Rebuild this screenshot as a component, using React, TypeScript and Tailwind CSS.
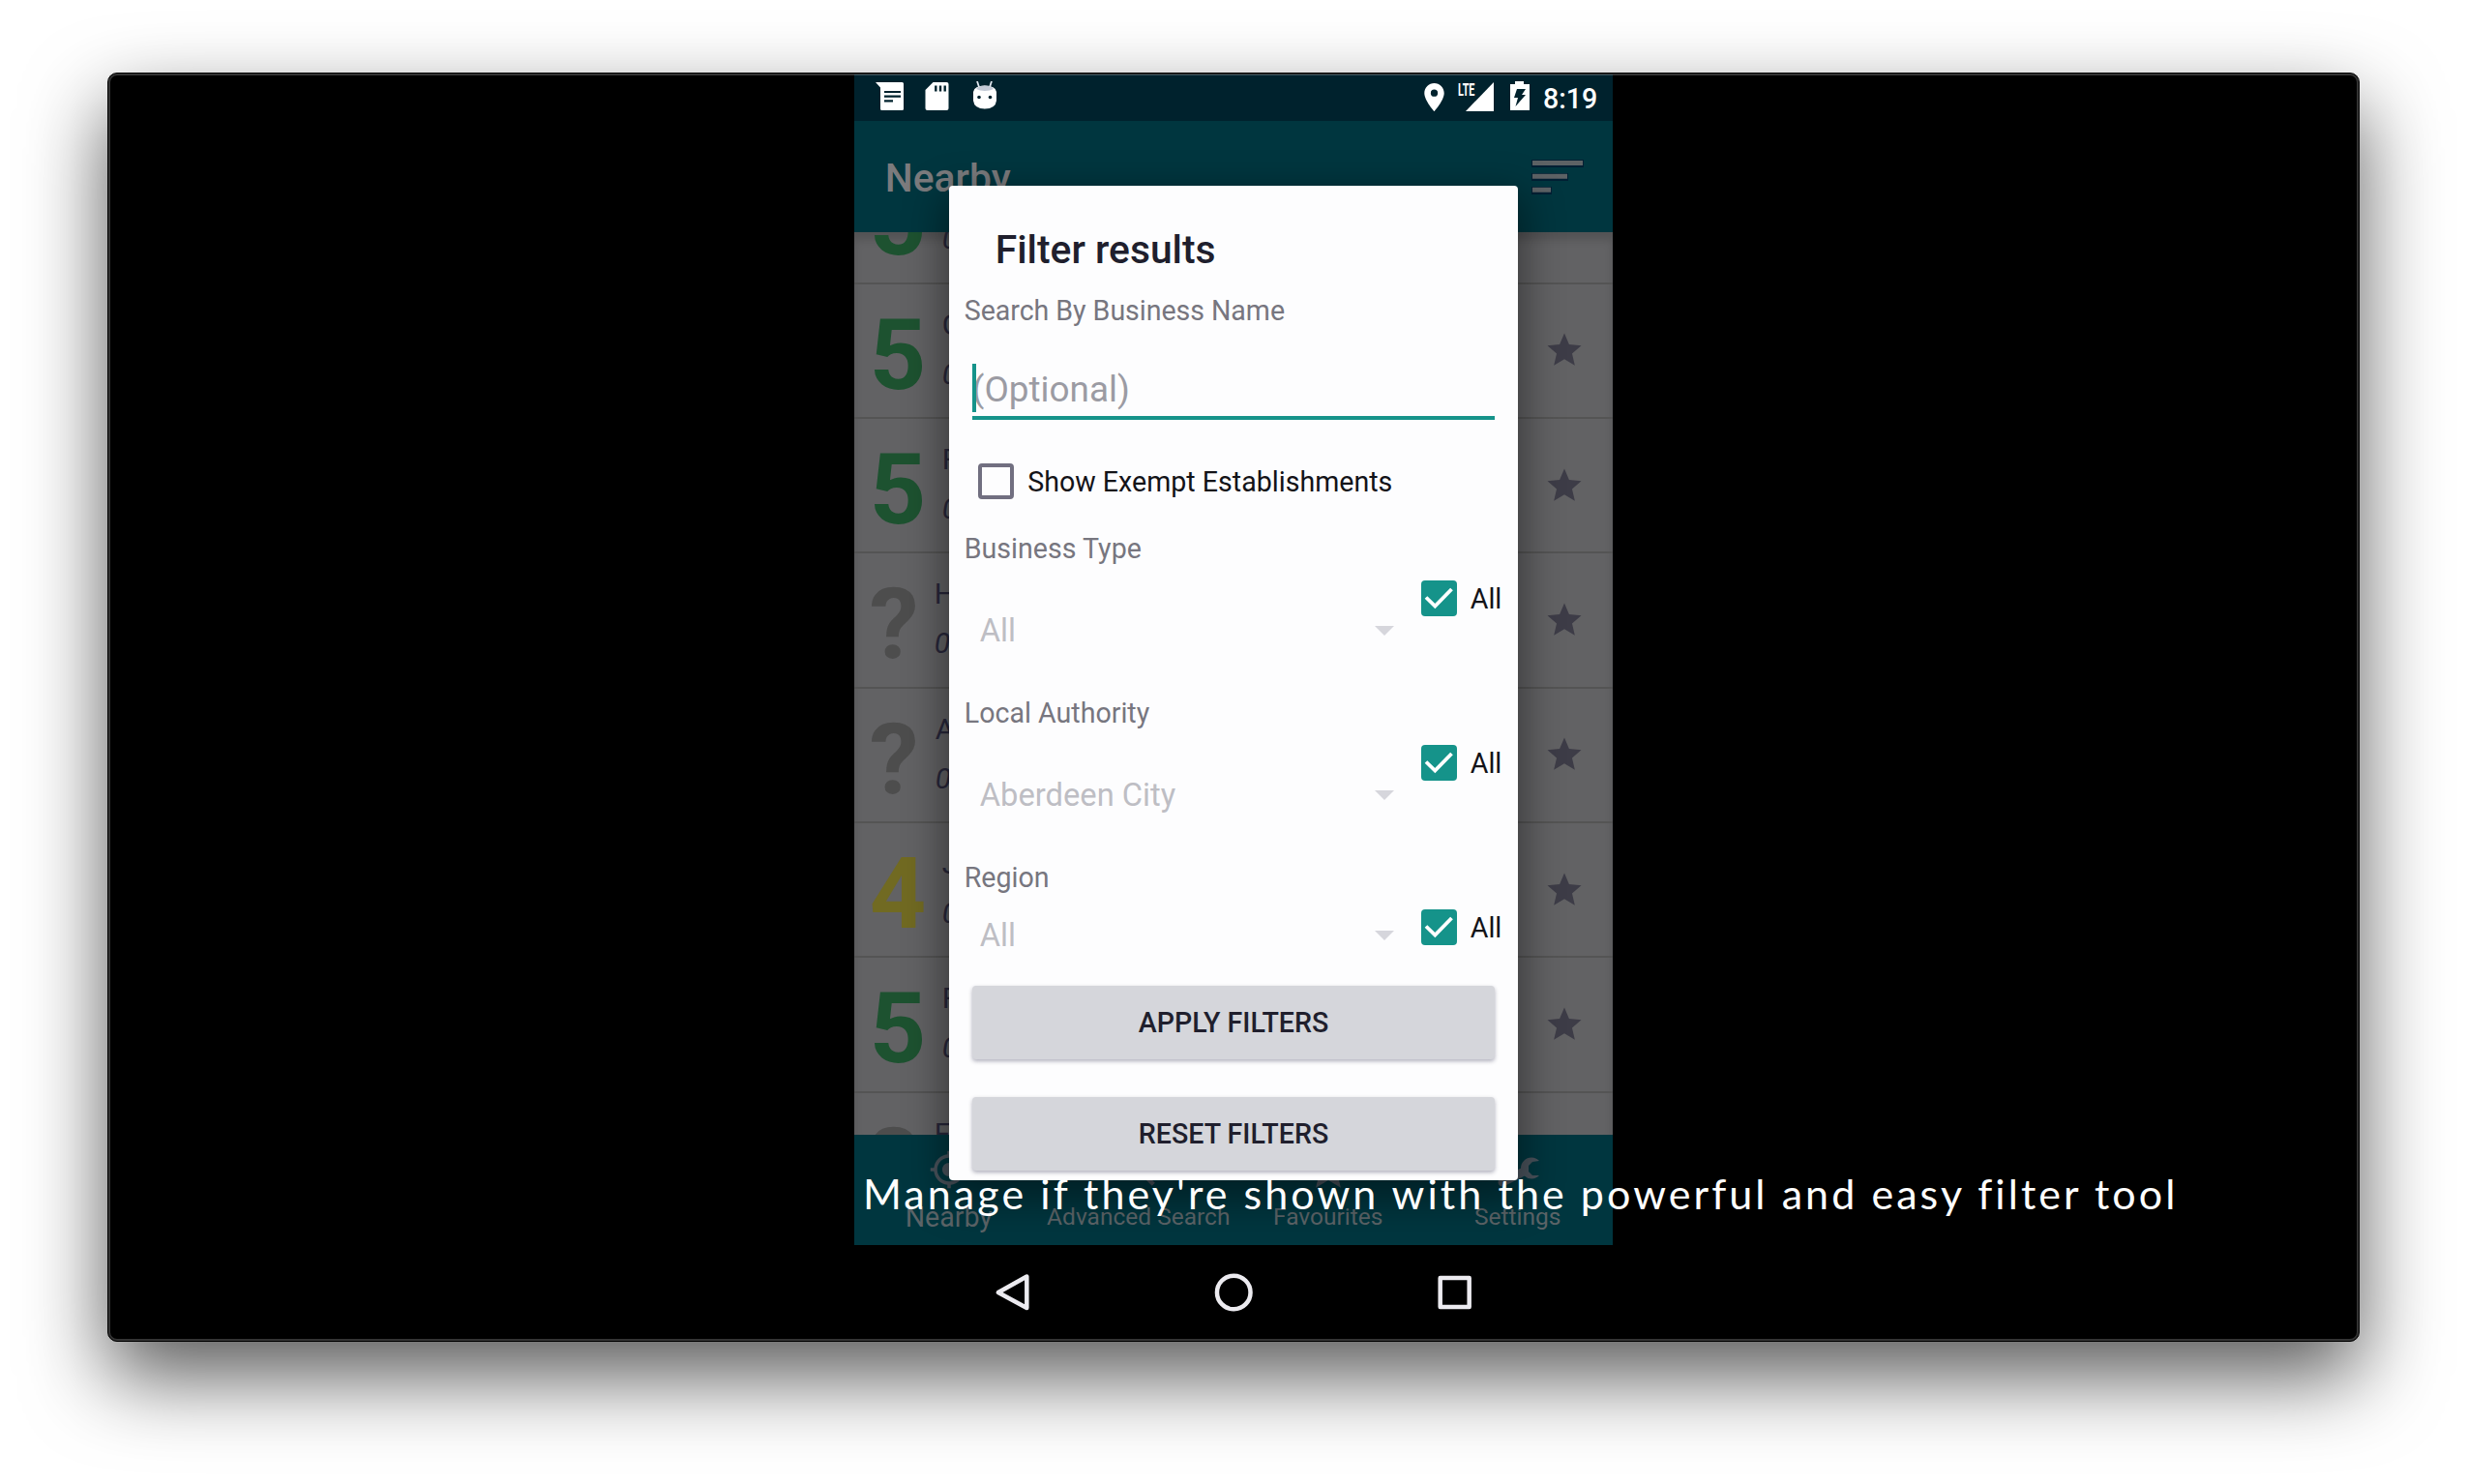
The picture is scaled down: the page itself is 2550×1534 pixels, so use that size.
import React from "react";
import { MdGpsFixed, MdSearch, MdStar, MdLocationOn } from "react-icons/md";

const STAR = "M12 17.3 18.2 21l-1.65-7.05L22 9.24l-7.2-.6L12 2 9.2 8.64 2 9.24l5.46 4.71L5.8 21z";

type Row = { mark: string; tone: string; title: string; indent: string };

const rows: Row[] = [
  { mark: "5", tone: "text-[#1d5230]", title: "C", indent: "pl-[91px]" },
  { mark: "5", tone: "text-[#1d5230]", title: "C", indent: "pl-[91px]" },
  { mark: "5", tone: "text-[#1d5230]", title: "F", indent: "pl-[91px]" },
  { mark: "?", tone: "text-[#4d4d4d]", title: "H", indent: "pl-[83px]" },
  { mark: "?", tone: "text-[#4d4d4d]", title: "A", indent: "pl-[84px]" },
  { mark: "4", tone: "text-[#716a22]", title: "J", indent: "pl-[91px]" },
  { mark: "5", tone: "text-[#1d5230]", title: "F", indent: "pl-[91px]" },
  { mark: "?", tone: "text-[#4d4d4d]", title: "F", indent: "pl-[83px]" },
];

function StatusBar() {
  return (
    <div className="flex h-[48.5px] items-start bg-[#00222d] text-white">
      <svg className="ml-[22px] mt-[8px] h-[30px] w-[30px] shrink-0" viewBox="0 0 30 30">
        <path d="M0 0h27.500q1.500 0 1.500 1.500v26q0 1.500-1.500 1.500h-21q-1.500 0-1.500-1.500V5.500z" fill="#fff" />
        <path d="M9 10h17M9 14.700h17M9 19.400h9" stroke="#00222d" strokeWidth="2.200" />
      </svg>
      <svg className="ml-[21px] mt-[8px] h-[30px] w-[25px] shrink-0" viewBox="0 0 25 30">
        <path d="M8.500 0h14q2 0 2 2v25q0 2-2 2h-20q-2 0-2-2V8z" fill="#fff" />
        <path d="M11.300 3.500v6M16 3.500v6M20.700 3.500v6" stroke="#00222d" strokeWidth="2.400" />
      </svg>
      <svg className="ml-[24px] mt-[7px] h-[30px] w-[26px] shrink-0" viewBox="0 0 26 30">
        <path d="M5 0l2 6M20 0l-2 6" stroke="#dfe6ee" strokeWidth="1.800" />
        <path d="M1 11q1-6.500 12-6.500t12 6.500v9q-1 8.500-12 8.500T1 20z" fill="#fff" />
        <path d="M4 8q2-3.500 9-3.500t9 3.500q-4 2-9 2T4 8z" fill="#c3cad6" />
        <circle cx="7" cy="16.500" r="1.800" fill="#00222d" />
        <circle cx="18.500" cy="16.500" r="1.800" fill="#00222d" />
      </svg>
      <div className="grow" />
      <MdLocationOn className="mt-[6px] h-[35px] w-[35px] shrink-0" />
      <div className="relative ml-[7px] mt-[8px] h-[30px] w-[38px] shrink-0">
        <svg className="h-[30px] w-[38px]" viewBox="0 0 38 30">
          <path d="M37 0v30H8z" fill="#fff" />
        </svg>
        <span className="absolute left-0 top-[1px] origin-left scale-x-[0.6] text-[18px] font-bold leading-[14px]">LTE</span>
      </div>
      <svg className="ml-[15px] mt-[7px] h-[31px] w-[22px] shrink-0" viewBox="0 0 22 31">
        <path d="M6 0h9v3h6v27H1V3h5z" fill="#fff" />
        <path d="M8 8h9l-4 6h4L6.500 26l2.500-9H5z" fill="#00222d" />
      </svg>
      <span className="ml-[13px] mr-[16px] mt-[8px] text-[28.6px] font-medium leading-[34px]">8:19</span>
    </div>
  );
}

function ListRow({ row }: { row: Row }) {
  return (
    <div className="relative flex h-[139.3px] shrink-0 items-center border-b-2 border-[#545454]">
      <div className={`absolute left-0 top-[16px] flex flex-col text-[30px] leading-[51px] text-[#28273a] ${row.indent}`}>
        <span>{row.title}</span>
        <span className="italic">0</span>
      </div>
      <span className={`w-[96px] pl-[16px] pt-[10px] text-[102px] font-bold leading-[129px] ${row.tone}`}>{row.mark}</span>
      <svg className="ml-auto mr-[29px] h-[42px] w-[42px]" viewBox="0 0 24 24">
        <path d={STAR} fill="#3d3c47" />
      </svg>
    </div>
  );
}

function Check() {
  return (
    <svg className="h-[37px] w-[37px] shrink-0" viewBox="0 0 37 37">
      <rect width="37" height="37" rx="4" fill="#15938a" />
      <path d="M5 17.500l9.300 9L31.500 9" fill="none" stroke="#fff" strokeWidth="3.800" />
    </svg>
  );
}

function FilterGroup({ label, value, tall }: { label: string; value: string; tall: boolean }) {
  return (
    <div className={tall ? "h-[170px]" : "h-[126px]"}>
      <div className="h-[32px] pl-[16px] text-[28.6px] leading-[32px] text-[#77767f]">{label}</div>
      <div className="flex pl-[32px]">
        <div className={`flex w-[428px] items-center ${tall ? "mt-[50px]" : "mt-[25px]"} h-[38px]`}>
          <span className="grow text-[32.7px] leading-[38px] text-[#bebec4]">{value}</span>
          <svg className="h-[10px] w-[20px]" viewBox="0 0 20 10">
            <path d="M0 0h20L10 10z" fill="#d6d6dc" />
          </svg>
        </div>
        <div className="ml-[28px] mt-[17px] flex h-[37px] items-center gap-[14px]">
          <Check />
          <span className="pt-[2px] text-[28.6px] leading-[37px] text-[#131318]">All</span>
        </div>
      </div>
    </div>
  );
}

function FilterDialog() {
  return (
    <div className="absolute left-[98px] top-[114.500px] z-20 h-[1028px] w-[588.500px] rounded-[4px] bg-[#fdfdfe] shadow-[0_14px_40px_6px_rgba(0,0,0,0.42)]">
      <div className="pl-[48px] pt-[36.500px] text-[40.8px] font-medium leading-[60px] text-[#201f2d]">Filter results</div>
      <div className="mt-[17px] pl-[16px] text-[28.6px] leading-[32px] tracking-[-0.05px] text-[#77767f]">Search By Business Name</div>
      <div className="relative ml-[24px] mt-[39px] h-[58px] w-[540px] border-b-4 border-[#15938a]">
        <span className="absolute left-0 top-0 h-[50px] w-[4px] bg-[#15938a]" />
        <span className="block text-[36.9px] leading-[53px] text-[#9b9ba3]">(Optional)</span>
      </div>
      <div className="ml-[30px] mt-[45px] flex h-[37px] items-center gap-[14.500px]">
        <span className="h-[37px] w-[37px] rounded-[4px] border-4 border-[#716f80]" />
        <span className="pt-[2px] text-[28.6px] leading-[37px] text-[#131318]">Show Exempt Establishments</span>
      </div>
      <div className="mt-[35px]">
        <FilterGroup label="Business Type" value="All" tall />
        <FilterGroup label="Local Authority" value="Aberdeen City" tall />
        <FilterGroup label="Region" value="All" tall={false} />
      </div>
      <div className="mx-[24px] mt-[2px] flex flex-col gap-[38.500px]">
        <button className="h-[76px] rounded-[4px] bg-[#d5d6db] text-[28.6px] font-medium leading-[76px] text-[#201f2d] shadow-[0_2px_4px_rgba(60,60,90,0.4)]">APPLY FILTERS</button>
        <button className="h-[76px] rounded-[4px] bg-[#d5d6db] text-[28.6px] font-medium leading-[76px] text-[#201f2d] shadow-[0_2px_4px_rgba(60,60,90,0.4)]">RESET FILTERS</button>
      </div>
    </div>
  );
}

function Tab({ icon, label, active }: { icon: React.ReactNode; label: string; active?: boolean }) {
  return (
    <div className="flex w-[196px] flex-col items-center pt-[15px]">
      <div className="flex h-[41px] w-[48px] items-center justify-center text-[#4a535c]">{icon}</div>
      <span className={`mt-[12px] whitespace-nowrap leading-[34px] text-[#5c6468] ${active ? "text-[28.6px]" : "text-[24.5px]"}`}>{label}</span>
    </div>
  );
}

export default function App() {
  return (
    <div className="h-[1534px] w-[2550px] overflow-hidden bg-white pl-[111px] pt-[75px] font-['Roboto',sans-serif]">
      <div className="relative flex h-[1312px] w-[2328px] justify-center rounded-[10px] border border-black bg-black shadow-[0_36px_84px_rgba(0,0,0,0.65)]">
        <div className="relative mt-px flex h-[1308px] w-[784.500px] flex-col">
          <StatusBar />
          <div className="relative z-10 flex h-[114.500px] justify-between bg-[#00363f]">
            <span className="pl-[32px] pt-[32px] text-[40.8px] font-medium leading-[54px] text-[#7b7b7d]">Nearby</span>
            <svg className="mr-[29px] mt-[38px] h-[40px] w-[56px]" viewBox="0 0 56 40">
              <path d="M1 6h54M1 20h38M1 34h21" stroke="#001f33" strokeWidth="8" />
              <path d="M2 5.500h52M2 19.200h36M2 33.200h19" stroke="#5d6265" strokeWidth="5" />
            </svg>
          </div>
          <div className="flex h-[933.500px] flex-col overflow-hidden bg-[#626264] shadow-[inset_0_8px_8px_rgba(0,0,0,0.15)]">
            <div className="-mt-[85.500px]" />
            {rows.map((row, i) => (
              <ListRow key={i} row={row} />
            ))}
          </div>
          <div className="flex h-[114px] bg-[#00363f]">
            <Tab active label="Nearby" icon={<MdGpsFixed className="h-[42px] w-[42px] shrink-0" />} />
            <Tab label="Advanced Search" icon={<MdSearch className="h-[49px] w-[49px] shrink-0" />} />
            <Tab label="Favourites" icon={<MdStar className="h-[50px] w-[50px] shrink-0" />} />
            <Tab
              label="Settings"
              icon={
                <svg className="h-[41px] w-[48px] shrink-0" viewBox="0 0 48 41">
                  <path d="M8 34L28 24" stroke="currentColor" strokeWidth="9" strokeLinecap="round" />
                  <path d="M46 12a11 11 0 1 0 0 15l-7 0-4-4v-6l4-4z" fill="currentColor" />
                </svg>
              }
            />
          </div>
          <svg className="h-[98px] w-full" viewBox="0 0 784 98">
            <g fill="none" stroke="#ecebf0" strokeWidth="4.500" strokeLinejoin="round">
              <path d="M178 32.500v32.500L148.500 49z" />
              <circle cx="392" cy="49" r="17.300" />
              <rect x="605.500" y="34" width="30" height="30" />
            </g>
          </svg>
          <FilterDialog />
        </div>
        <p className="absolute left-[780px] top-[1130.500px] z-30 whitespace-nowrap font-['Lato',sans-serif] text-[43px] leading-[54px] tracking-[3.07px] text-white">
          Manage if they're shown with the powerful and easy filter tool
        </p>
        <div className="pointer-events-none absolute inset-0 z-40 rounded-[9px] border-2 border-white/20" />
      </div>
    </div>
  );
}
